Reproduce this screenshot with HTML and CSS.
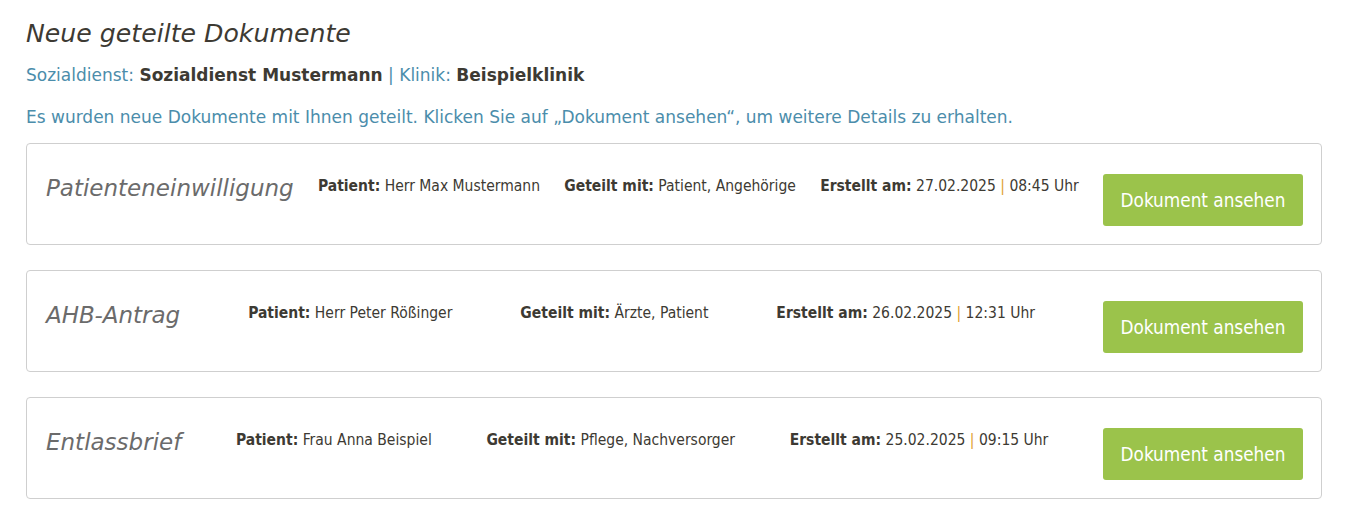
FILE: index.html
```html
<!DOCTYPE html>
<html lang="de">
<head>
<meta charset="utf-8">
<title>Neue geteilte Dokumente</title>
<link rel="stylesheet" href="styles.css">
</head>
<body>
<main class="page">
  <h1 class="page-title">Neue geteilte Dokumente</h1>
  <p class="context"><span class="label">Sozialdienst:</span> <strong>Sozialdienst Mustermann</strong> <span class="label">| Klinik:</span> <strong>Beispielklinik</strong></p>
  <p class="intro">Es wurden neue Dokumente mit Ihnen geteilt. Klicken Sie auf „Dokument ansehen“, um weitere Details zu erhalten.</p>

  <section class="doc-list">
    <article class="doc-card">
      <h2 class="doc-title">Patienteneinwilligung</h2>
      <div class="meta"><b>Patient:</b> Herr Max Mustermann</div>
      <div class="meta"><b>Geteilt mit:</b> Patient, Angehörige</div>
      <div class="meta"><b>Erstellt am:</b> 27.02.2025 <span class="sep">|</span> 08:45 Uhr</div>
      <a class="btn" href="#">Dokument ansehen</a>
    </article>
    <article class="doc-card">
      <h2 class="doc-title">AHB-Antrag</h2>
      <div class="meta"><b>Patient:</b> Herr Peter Rößinger</div>
      <div class="meta"><b>Geteilt mit:</b> Ärzte, Patient</div>
      <div class="meta"><b>Erstellt am:</b> 26.02.2025 <span class="sep">|</span> 12:31 Uhr</div>
      <a class="btn" href="#">Dokument ansehen</a>
    </article>
    <article class="doc-card">
      <h2 class="doc-title">Entlassbrief</h2>
      <div class="meta"><b>Patient:</b> Frau Anna Beispiel</div>
      <div class="meta"><b>Geteilt mit:</b> Pflege, Nachversorger</div>
      <div class="meta"><b>Erstellt am:</b> 25.02.2025 <span class="sep">|</span> 09:15 Uhr</div>
      <a class="btn" href="#">Dokument ansehen</a>
    </article>
  </section>
</main>
</body>
</html>
```

FILE: styles.css
```css
* { box-sizing: border-box; }
html, body { margin: 0; padding: 0; background: #fff; }
body {
  font-family: "DejaVu Sans", sans-serif;
  color: #3d3a33;
}
.page {
  width: 1296px;
  margin-left: 26px;
  padding-top: 15px;
}
.page-title {
  margin: 0;
  font-size: 25.2px;
  line-height: 38px;
  font-weight: normal;
  font-style: italic;
  color: #3d3a33;
}
.context {
  margin: 9px 0 0;
  font-size: 17px;
  line-height: 26px;
}
.context .label { color: #4b8dab; }
.context strong { color: #3d3a33; font-weight: bold; }
.intro {
  margin: 16px 0 0;
  font-size: 17px;
  line-height: 26px;
  color: #4b8dab;
}
.doc-list {
  margin-top: 13px;
  display: flex;
  flex-direction: column;
  gap: 25px;
}
.doc-card {
  display: flex;
  justify-content: space-between;
  align-items: flex-start;
  border: 1px solid #cfcfcf;
  border-radius: 4px;
  padding: 30px 18px 18px 19px;
  height: 102px;
}
.doc-title {
  margin: -1px 0 0;
  font-size: 23px;
  line-height: 30px;
  font-weight: normal;
  font-style: italic;
  color: #6b6b6b;
}
.meta {
  margin-top: 2px;
  font-family: "DejaVu Sans Condensed", "DejaVu Sans", sans-serif;
  font-stretch: condensed;
  font-size: 15.5px;
  line-height: 20px;
  color: #3d3a33;
  white-space: nowrap;
}
.meta b { font-weight: bold; }
.sep { color: #e0a030; }
.btn {
  display: flex;
  align-items: center;
  justify-content: center;
  width: 200px;
  height: 52px;
  background: #9bc34b;
  color: #fff;
  border-radius: 3px;
  font-family: "DejaVu Sans Condensed", "DejaVu Sans", sans-serif;
  font-stretch: condensed;
  font-size: 18.8px;
  text-decoration: none;
}
```
